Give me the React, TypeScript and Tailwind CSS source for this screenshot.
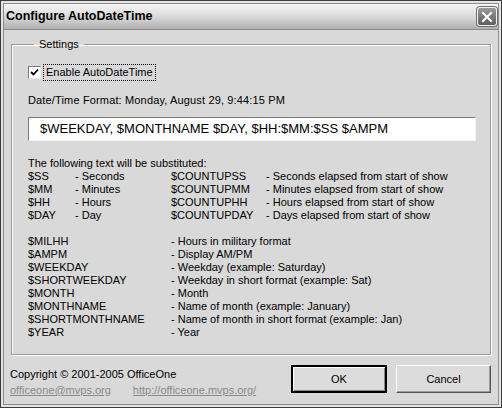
import React from 'react'

const font = { fontFamily: '"Liberation Sans", Arial, sans-serif' }

const countRows = [
  ['$SS', '- Seconds', '$COUNTUPSS', '- Seconds elapsed from start of show'],
  ['$MM', '- Minutes', '$COUNTUPMM', '- Minutes elapsed from start of show'],
  ['$HH', '- Hours', '$COUNTUPHH', '- Hours elapsed from start of show'],
  ['$DAY', '- Day', '$COUNTUPDAY', '- Days elapsed from start of show'],
]

const moreRows = [
  ['$MILHH', '- Hours in military format'],
  ['$AMPM', '- Display AM/PM'],
  ['$WEEKDAY', '- Weekday (example: Saturday)'],
  ['$SHORTWEEKDAY', '- Weekday in short format (example: Sat)'],
  ['$MONTH', '- Month'],
  ['$MONTHNAME', '- Name of month (example: January)'],
  ['$SHORTMONTHNAME', '- Name of month in short format (example: Jan)'],
  ['$YEAR', '- Year'],
]

export default function App() {
  return (
    <div style={font} className="w-[502px] h-[408px] bg-[#e4e4e4] border border-[#3c3c3c] p-[2px] text-[11px] text-black">
      <div className="h-full flex flex-col border border-[#8c8c8c] bg-[#d9d9d9]">
        {/* title bar */}
        <div className="h-[26px] flex items-center justify-between pl-[2px] pr-[1px] bg-gradient-to-b from-[#f6f6f6] via-[#dadada] to-[#b0b0b0] border-b border-[#8a8a8a]">
          <span className="text-[12.5px] font-bold">Configure AutoDateTime</span>
          <div className="w-[20px] h-[19px] rounded-[3px] border border-[#f0f0f0] bg-gradient-to-b from-[#9a9a9a] to-[#5e5e5e] flex items-center justify-center shadow-[0_0_0_1px_#707070]">
            <svg width="12" height="12" viewBox="0 0 12 12">
              <path d="M2 2 L10 10 M10 2 L2 10" stroke="white" strokeWidth="2" strokeLinecap="square" />
            </svg>
          </div>
        </div>

        {/* settings group */}
        <fieldset className="mx-[7px] mt-[8px] h-[317px] border border-[#9a9a9a] shadow-[inset_1px_1px_0_#ffffff,1px_1px_0_#ffffff] pl-[16px] pr-[12px]">
          <legend className="ml-[6px] px-[5px] leading-[13px]">Settings</legend>

          <div className="mt-[13px] flex items-center h-[17px]">
            <div className="w-[13px] h-[13px] bg-white border border-t-[#7a7a7a] border-l-[#7a7a7a] border-b-[#e8e8e8] border-r-[#e8e8e8] flex items-center justify-center">
              <svg width="9" height="9" viewBox="0 0 9 9">
                <path d="M1 4 L3.5 6.5 L8 1.5" fill="none" stroke="black" strokeWidth="1.8" />
              </svg>
            </div>
            <span className="ml-[2px] px-[2px] h-[17px] flex items-center border border-dotted border-black">Enable AutoDateTime</span>
          </div>

          <div className="mt-[13px] leading-[13px] tracking-[0.15px]">Date/Time Format: Monday, August 29, 9:44:15 PM</div>

          <div className="mt-[10px] w-[448px] h-[24px] bg-white border border-t-[#7a7a7a] border-l-[#7a7a7a] border-b-[#f4f4f4] border-r-[#f4f4f4] flex items-center pl-[11px] text-[13px]">
            $WEEKDAY, $MONTHNAME $DAY, $HH:$MM:$SS $AMPM
          </div>

          <div className="mt-[16px] leading-[13px]">The following text will be substituted:</div>
          <div className="grid grid-cols-[47px_96px_95px_1fr] leading-[13px]">
            {countRows.map((r) => (
              <React.Fragment key={r[0]}>
                <span>{r[0]}</span>
                <span>{r[1]}</span>
                <span>{r[2]}</span>
                <span>{r[3]}</span>
              </React.Fragment>
            ))}
          </div>

          <div className="mt-[13px] grid grid-cols-[143px_1fr] leading-[13px]">
            {moreRows.map((r) => (
              <React.Fragment key={r[0]}>
                <span>{r[0]}</span>
                <span>{r[1]}</span>
              </React.Fragment>
            ))}
          </div>
        </fieldset>

        {/* footer */}
        <div className="flex justify-between pl-[6px] pr-[7px] mt-[9px]">
          <div className="flex flex-col leading-[16px] pt-[2px]">
            <span>Copyright © 2001-2005 OfficeOne</span>
            <div className="flex gap-[22px] text-[#8a8a8a] underline">
              <span>officeone@mvps.org</span>
              <span>http://officeone.mvps.org/</span>
            </div>
          </div>
          <div className="flex gap-[9px] pt-[1px]">
            <button className="w-[96px] h-[28px] border-2 border-black bg-[#dcdcdc] shadow-[inset_1px_1px_0_#ffffff,inset_-1px_-1px_0_#8a8a8a] text-[11px]" style={font}>OK</button>
            <button className="w-[95px] h-[28px] border border-t-[#ffffff] border-l-[#ffffff] border-b-[#555555] border-r-[#555555] bg-[#dcdcdc] shadow-[inset_-1px_-1px_0_#9a9a9a] text-[11px]" style={font}>Cancel</button>
          </div>
        </div>
      </div>
    </div>
  )
}
